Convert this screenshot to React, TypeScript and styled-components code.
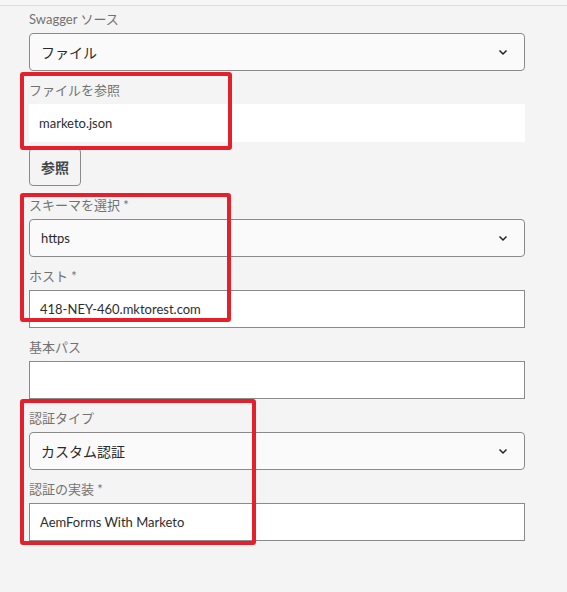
import React from "react";
import styled, { createGlobalStyle } from "styled-components";

const Global = createGlobalStyle`
  html, body { margin: 0; padding: 0; background: #f4f4f4; }
  body { font-family: Lato, "Noto Sans CJK JP", sans-serif; }
`;

const Page = styled.div`
  position: relative;
  width: 567px;
  height: 592px;
  background: #f4f4f4;
  overflow: hidden;
`;

const TopStrip = styled.div`
  height: 5px;
  background: #f6f6f6;
  border-bottom: 1px solid #dedede;
`;

const Form = styled.div`
  display: flex;
  flex-direction: column;
  gap: 11px;
  padding: 5px 0 0 29px;
  width: 496px;
`;

const Group = styled.div`
  display: flex;
  flex-direction: column;
  gap: 6px;
`;

const Label = styled.div`
  font-family: Lato, "Noto Sans CJK JP", sans-serif;
  font-size: 13px;
  font-weight: 400;
  line-height: 16px;
  color: #727272;
  height: 16px;
  white-space: nowrap;
`;

const SelectBox = styled.div<{ $big?: boolean }>`
  box-sizing: border-box;
  height: 38px;
  display: flex;
  align-items: center;
  justify-content: space-between;
  padding: 0 16px 0 11px;
  border: 1px solid #8a8a8a;
  border-radius: 4px;
  background: #fafafa;
  color: #2a2a2a;
  font-family: Lato, "Noto Sans CJK JP", sans-serif;
  font-weight: 400;
  font-size: ${(p) => (p.$big ? "14px" : "13px")};
`;

const InputBox = styled.div<{ $plain?: boolean }>`
  box-sizing: border-box;
  height: 38px;
  display: flex;
  align-items: center;
  padding: 0 10px;
  border: ${(p) => (p.$plain ? "none" : "1px solid #8a8a8a")};
  background: #fff;
  color: #2e2e2e;
  font-family: Lato, "Noto Sans CJK JP", sans-serif;
  font-size: 13px;
`;

const Button = styled.div`
  box-sizing: border-box;
  width: 52px;
  height: 38px;
  display: flex;
  align-items: center;
  justify-content: center;
  border: 1px solid #8a8a8a;
  border-radius: 4px;
  background: #f4f4f4;
  color: #444;
  font-family: "Noto Sans CJK JP", sans-serif;
  font-weight: 700;
  font-size: 14px;
`;

const Highlight = styled.div`
  position: absolute;
  box-sizing: border-box;
  border: 4px solid #e3202b;
  border-radius: 3px;
  pointer-events: none;
`;

const Chevron = () => (
  <svg width="10" height="7" viewBox="0 0 10 7">
    <path d="M1.5 1.5 L5 5 L8.5 1.5" fill="none" stroke="#222" strokeWidth="1.5" />
  </svg>
);

const Select = ({ value, big }: { value: string; big?: boolean }) => (
  <SelectBox $big={big}>
    <span>{value}</span>
    <Chevron />
  </SelectBox>
);

export default function App() {
  return (
    <Page>
      <Global />
      <TopStrip />
      <Form>
        <Group>
          <Label>Swagger ソース</Label>
          <Select value="ファイル" big />
        </Group>
        <Group>
          <Label>ファイルを参照</Label>
          <InputBox $plain>marketo.json</InputBox>
          <Button>参照</Button>
        </Group>
        <Group>
          <Label>スキーマを選択 *</Label>
          <Select value="https" />
        </Group>
        <Group>
          <Label>ホスト *</Label>
          <InputBox>418-NEY-460.mktorest.com</InputBox>
        </Group>
        <Group>
          <Label>基本パス</Label>
          <InputBox />
        </Group>
        <Group>
          <Label>認証タイプ</Label>
          <Select value="カスタム認証" big />
        </Group>
        <Group>
          <Label>認証の実装 *</Label>
          <InputBox>AemForms With Marketo</InputBox>
        </Group>
      </Form>
      <Highlight style={{ left: 20, top: 72, width: 212, height: 78 }} />
      <Highlight style={{ left: 20, top: 193, width: 211, height: 129 }} />
      <Highlight style={{ left: 20, top: 399, width: 236, height: 146 }} />
    </Page>
  );
}
